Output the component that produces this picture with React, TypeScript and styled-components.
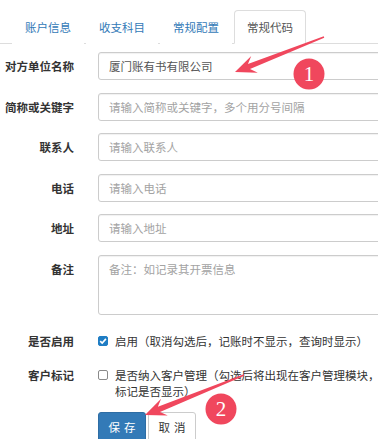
import React from "react";
import styled, { createGlobalStyle } from "styled-components";

const GlobalStyle = createGlobalStyle`
	html, body {
		margin: 0;
		padding: 0;
		background: #fff;
	}
`;

const Page = styled.div`
	position: relative;
	width: 378px;
	height: 439px;
	overflow: hidden;
	background: #fff;
	font-family: "Noto Sans CJK SC", "Noto Sans", sans-serif;
	font-size: 11.5px;
	line-height: 16px;
	color: #333;
`;

const TabList = styled.ul`
	display: flex;
	height: 33px;
	margin: 0 0 8px;
	padding: 10px 0 0 12px;
	list-style: none;
	border-bottom: 1px solid #ddd;
`;

const Tab = styled.li<{ $active?: boolean }>`
	box-sizing: border-box;
	display: flex;
	align-items: center;
	height: 34px;
	margin: 0 2px 0 0;
	padding: 0 12px 1px;
	border: 1px solid ${({ $active }) => ($active ? "#ddd" : "transparent")};
	border-bottom-color: ${({ $active }) => ($active ? "#fff" : "transparent")};
	border-radius: 4px 4px 0 0;
	background: #fff;
	color: ${({ $active }) => ($active ? "#555" : "#337ab7")};
	white-space: nowrap;
`;

const Form = styled.form`
	display: flex;
	flex-direction: column;
	margin: 0;
`;

const Row = styled.div<{ $top?: boolean }>`
	display: flex;
	align-items: ${({ $top }) => ($top ? "flex-start" : "center")};
	gap: 24px;
	margin-bottom: 12.5px;
`;

const Label = styled.label`
	flex: none;
	width: 74px;
	text-align: right;
	font-weight: bold;
	line-height: 28px;
	white-space: nowrap;
`;

const Input = styled.input`
	box-sizing: border-box;
	flex: none;
	width: 300px;
	height: 28px;
	margin: 0;
	padding: 0 10px;
	border: 1px solid #ccc;
	border-radius: 3px;
	font: inherit;
	color: #555;
	box-shadow: inset 0 1px 1px rgba(0, 0, 0, 0.06);
	outline: none;

	&::placeholder {
		color: #a3a3a3;
	}
`;

const TextArea = styled.textarea`
	box-sizing: border-box;
	display: block;
	flex: none;
	width: 300px;
	height: 60px;
	margin: 0;
	padding: 5px 10px;
	border: 1px solid #ccc;
	border-radius: 3px;
	font: inherit;
	line-height: 16px;
	color: #555;
	resize: none;
	box-shadow: inset 0 1px 1px rgba(0, 0, 0, 0.06);
	outline: none;

	&::placeholder {
		color: #a3a3a3;
	}
`;

const CheckRow = styled.div`
	display: flex;
	align-items: flex-start;
	gap: 24px;
	padding-top: 6px;
	margin-bottom: 12px;
`;

const CheckLabel = styled.span`
	flex: none;
	width: 74px;
	text-align: right;
	font-weight: bold;
	white-space: nowrap;
`;

const CheckOption = styled.label`
	display: flex;
	flex: none;
	width: 300px;
	align-items: flex-start;
	gap: 7px;
`;

const Box = styled.input`
	appearance: none;
	box-sizing: border-box;
	flex: none;
	width: 10px;
	height: 10px;
	margin: 3px 0 0;
	border: 1px solid #8a8a8a;
	border-radius: 2px;
	background: #fff;

	&:checked {
		border-color: #1f7dc4;
		background: #1f7dc4
			url("data:image/svg+xml,%3Csvg xmlns='http://www.w3.org/2000/svg' viewBox='0 0 10 10'%3E%3Cpath d='M2.2 5.2 4.2 7.1 7.9 2.9' fill='none' stroke='white' stroke-width='1.6'/%3E%3C/svg%3E")
			center / 10px 10px no-repeat;
	}
`;

const OptionText = styled.span`
	width: 270px;
`;

const Actions = styled.div`
	display: flex;
	gap: 2px;
	margin: 1px 0 0 98px;
`;

const Button = styled.button<{ $primary?: boolean }>`
	box-sizing: border-box;
	width: 48px;
	height: 30px;
	margin: 0;
	padding: 0 0 0 4px;
	border: 1px solid ${({ $primary }) => ($primary ? "#2e6da4" : "#ccc")};
	border-radius: 3px;
	background: ${({ $primary }) => ($primary ? "#337ab7" : "#fff")};
	color: ${({ $primary }) => ($primary ? "#fff" : "#333")};
	font: inherit;
	letter-spacing: 4px;
`;

const Overlay = styled.svg`
	position: absolute;
	left: 0;
	top: 0;
	pointer-events: none;
`;

const ARROW_RED = "#f0475d";

function Arrow({ from, to }: { from: [number, number]; to: [number, number] }) {
	const dx = to[0] - from[0];
	const dy = to[1] - from[1];
	const len = Math.hypot(dx, dy);
	const angle = (Math.atan2(dy, dx) * 180) / Math.PI;
	const pts = [
		[0, -0.7],
		[len - 15, -2.8],
		[len - 21, -9],
		[len, 0],
		[len - 21, 9],
		[len - 15, 2.8],
		[0, 0.7],
	]
		.map((p) => p.join(","))
		.join(" ");
	return (
		<polygon
			points={pts}
			fill={ARROW_RED}
			transform={`translate(${from[0]} ${from[1]}) rotate(${angle})`}
		/>
	);
}

function Badge({ x, y, n }: { x: number; y: number; n: number }) {
	return (
		<g>
			<circle cx={x} cy={y} r={15.5} fill={ARROW_RED} />
			<text
				x={x}
				y={y + 7}
				textAnchor="middle"
				fill="#fff"
				fontFamily="'Liberation Serif', serif"
				fontSize="21"
			>
				{n}
			</text>
		</g>
	);
}

export default function App() {
	return (
		<>
			<GlobalStyle />
			<Page>
				<TabList>
					<Tab>账户信息</Tab>
					<Tab>收支科目</Tab>
					<Tab>常规配置</Tab>
					<Tab $active>常规代码</Tab>
				</TabList>
				<Form onSubmit={(e) => e.preventDefault()}>
					<Row>
						<Label>对方单位名称</Label>
						<Input defaultValue="厦门账有书有限公司" />
					</Row>
					<Row>
						<Label>简称或关键字</Label>
						<Input placeholder="请输入简称或关键字，多个用分号间隔" />
					</Row>
					<Row>
						<Label>联系人</Label>
						<Input placeholder="请输入联系人" />
					</Row>
					<Row>
						<Label>电话</Label>
						<Input placeholder="请输入电话" />
					</Row>
					<Row>
						<Label>地址</Label>
						<Input placeholder="请输入地址" />
					</Row>
					<Row $top>
						<Label>备注</Label>
						<TextArea placeholder="备注：如记录其开票信息" />
					</Row>
					<CheckRow>
						<CheckLabel>是否启用</CheckLabel>
						<CheckOption>
							<Box type="checkbox" defaultChecked />
							<OptionText>启用（取消勾选后，记账时不显示，查询时显示）</OptionText>
						</CheckOption>
					</CheckRow>
					<CheckRow>
						<CheckLabel>客户标记</CheckLabel>
						<CheckOption>
							<Box type="checkbox" />
							<OptionText>
								是否纳入客户管理（勾选后将出现在客户管理模块，标记是否显示）
							</OptionText>
						</CheckOption>
					</CheckRow>
					<Actions>
						<Button type="submit" $primary>
							保存
						</Button>
						<Button type="button">取消</Button>
					</Actions>
				</Form>
				<Overlay width="378" height="439" viewBox="0 0 378 439">
					<Arrow from={[324, 37]} to={[235, 72]} />
					<Badge x={309} y={74} n={1} />
					<Arrow from={[244, 375]} to={[145, 415]} />
					<Badge x={221} y={409} n={2} />
				</Overlay>
			</Page>
		</>
	);
}
